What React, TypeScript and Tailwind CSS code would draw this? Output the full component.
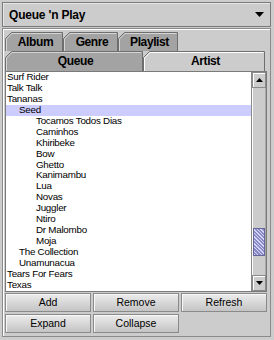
import React from "react";

type TabProps = { label: string; w: number; h: number; cls: string; selected?: boolean };

function Tab({ label, w, h, cls, selected }: TabProps) {
  const fill = selected ? "#cccccc" : "#a3a3a3";
  return (
    <div className={`relative flex items-center justify-center shrink-0 ${cls}`}>
      <svg className="absolute left-0 top-0" width={w} height={h} viewBox={`0 0 ${w} ${h}`}>
        <path d={`M0.5 ${h} V6.5 L6.5 0.5 H${w - 0.5} V${h}`} fill={fill} stroke="#6e6e6e" strokeWidth="1" />
        <path d={`M1.5 ${h} V7 L7 1.5 H${w - 1.5}`} fill="none" stroke="#ffffff" strokeWidth="1" opacity={selected ? 1 : 0.55} />
      </svg>
      <span className="relative text-[12px] font-bold leading-none tracking-[-0.4px] pl-[3px]">{label}</span>
    </div>
  );
}

const rows: { t: string; l: number; sel?: boolean }[] = [
  { t: "Surf Rider", l: 0 },
  { t: "Talk Talk", l: 0 },
  { t: "Tananas", l: 0 },
  { t: "Seed", l: 1, sel: true },
  { t: "Tocamos Todos Dias", l: 2 },
  { t: "Caminhos", l: 2 },
  { t: "Khiribeke", l: 2 },
  { t: "Bow", l: 2 },
  { t: "Ghetto", l: 2 },
  { t: "Kanimambu", l: 2 },
  { t: "Lua", l: 2 },
  { t: "Novas", l: 2 },
  { t: "Juggler", l: 2 },
  { t: "Ntiro", l: 2 },
  { t: "Dr Malombo", l: 2 },
  { t: "Moja", l: 2 },
  { t: "The Collection", l: 1 },
  { t: "Unamunacua", l: 1 },
  { t: "Tears For Fears", l: 0 },
  { t: "Texas", l: 0 },
];

const indent = ["pl-[1px]", "pl-[13px]", "pl-[30px]"];

function Btn({ label }: { label: string }) {
  return (
    <div className="h-[19px] flex items-center justify-center border border-[#8a8a8a] bg-linear-to-b from-[#ececec] to-[#c4c4c4] shadow-[inset_1px_1px_0_#f8f8f8] text-[10.5px] leading-none">
      {label}
    </div>
  );
}

export default function App() {
  return (
    <div className="w-[274px] h-[340px] bg-[#cccccc] pt-[2px] pl-[2px] overflow-hidden text-black font-['Liberation_Sans',Arial,sans-serif]">
      {/* header combo */}
      <div className="w-[269px] h-[25px] border border-[#7a7a7a] shadow-[inset_1px_1px_0_#e6e6e6] flex items-center justify-between pl-[6px] pr-[6px]">
        <span className="text-[12px] font-bold leading-none tracking-[-0.2px]">Queue 'n Play</span>
        <svg width="9" height="5" viewBox="0 0 9 5">
          <path d="M0 0 H9 L4.5 5 Z" fill="#000" />
        </svg>
      </div>

      {/* tabbed panel */}
      <div className="mt-[1px] w-[269px] border border-[#8a8a8a] shadow-[inset_1px_1px_0_#ffffff] pt-[3px] pl-[2px] pr-[3px] pb-[3px]">
        <div className="flex h-[19px]">
          <Tab label="Album" w={58} h={19} cls="w-[58px] h-[19px]" />
          <Tab label="Genre" w={55} h={19} cls="w-[55px] h-[19px]" />
          <Tab label="Playlist" w={60} h={19} cls="w-[60px] h-[19px]" />
        </div>
        <div className="flex h-[20px]">
          <Tab label="Queue" w={138} h={20} cls="w-[138px] h-[20px]" />
          <Tab label="Artist" w={122} h={20} cls="w-[122px] h-[20px]" selected />
        </div>

        {/* list */}
        <div className="h-[221px] border border-[#7a7a7a] bg-white flex">
          <div className="flex-1 overflow-hidden text-[9.8px] leading-[10.95px] tracking-[-0.25px]">
            {rows.map((r) => (
              <div key={r.t} className={`h-[10.95px] whitespace-nowrap ${indent[r.l]} ${r.sel ? "bg-[#ccccff]" : ""}`}>
                {r.t}
              </div>
            ))}
          </div>
          <div className="w-[15px] flex flex-col border-l border-[#8a8a8a] bg-[#cccccc]">
            <div className="h-[16px] border border-[#8a8a8a] shadow-[inset_1px_1px_0_#ffffff] flex items-center justify-center">
              <svg width="7" height="4" viewBox="0 0 7 4">
                <path d="M0 4 H7 L3.5 0 Z" fill="#000" />
              </svg>
            </div>
            <div className="flex-1 flex flex-col border-l border-white border-r border-r-[#a8a8a8]">
              <div className="h-[140px] shrink-0" />
              <div className="h-[28px] shrink-0 border border-[#666699] bg-[#9a9ad0] bg-[repeating-linear-gradient(45deg,#d4d4ff_0px,#d4d4ff_1px,#8a8ac4_1px,#8a8ac4_2.5px)]" />
            </div>
            <div className="h-[16px] border border-[#8a8a8a] shadow-[inset_1px_1px_0_#ffffff] flex items-center justify-center">
              <svg width="7" height="4" viewBox="0 0 7 4">
                <path d="M0 0 H7 L3.5 4 Z" fill="#000" />
              </svg>
            </div>
          </div>
        </div>

        {/* buttons */}
        <div className="mt-[1px] grid grid-cols-3 gap-[2px]">
          <Btn label="Add" />
          <Btn label="Remove" />
          <Btn label="Refresh" />
          <Btn label="Expand" />
          <Btn label="Collapse" />
        </div>
      </div>
    </div>
  );
}
